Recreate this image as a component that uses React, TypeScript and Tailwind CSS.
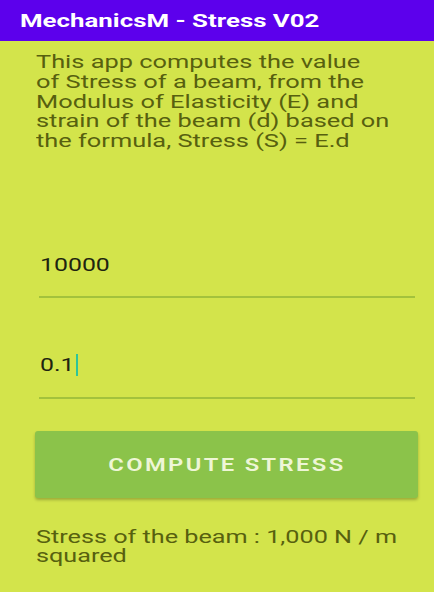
import React from "react";

export default function App() {
  return (
    <div className="w-[434px] h-[592px] bg-[#d3e44b] font-['Roboto',sans-serif] overflow-hidden flex flex-col">
      <div className="h-[41px] bg-[#5c00ec] flex items-center pl-[20px] shrink-0">
        <span className="inline-block origin-left scale-x-[1.36] text-white font-bold text-[19px] leading-none">
          MechanicsM - Stress V02
        </span>
      </div>
      <div className="pl-[36px] mt-[11px] text-[18px] leading-[19.75px] text-[#57600f]">
        <div className="inline-block origin-left scale-x-[1.41] whitespace-nowrap">
          This app computes the value
          <br />
          of Stress of a beam, from the
          <br />
          Modulus of Elasticity (E) and
          <br />
          strain of the beam (d) based on
          <br />
          the formula, Stress (S) = E.d
        </div>
      </div>
      <div className="ml-[39px] mr-[19px] mt-[103px] flex flex-col">
        <div className="pl-[1px] text-[18px] leading-[21px] text-[#1e2410]">
          <span className="inline-block origin-left scale-x-[1.38]">10000</span>
        </div>
        <div className="mt-[21px] h-[2px] bg-[#a3c23c]" />
        <div className="mt-[56px] pl-[1px] text-[18px] leading-[21px] text-[#1e2410] flex items-center">
          <span className="inline-block origin-left scale-x-[1.38]">0.1</span>
          <span className="ml-[11px] w-[2px] h-[22px] bg-[#2ec49a]" />
        </div>
        <div className="mt-[21px] h-[2px] bg-[#a3c23c]" />
      </div>
      <div className="ml-[35px] mr-[16px] mt-[32px] h-[67px] rounded-[3px] bg-[#8bc34a] shadow-[0_2px_3px_rgba(0,0,0,0.25)] flex items-center justify-center">
        <span className="inline-block scale-x-[1.32] text-[#eef6d6] font-semibold text-[18px] tracking-[1.8px]">
          COMPUTE STRESS
        </span>
      </div>
      <div className="pl-[36px] mt-[29px] text-[18px] leading-[19px] text-[#57600f]">
        <div className="inline-block origin-left scale-x-[1.4] whitespace-nowrap">
          Stress of the beam : 1,000 N / m
          <br />
          squared
        </div>
      </div>
    </div>
  );
}
